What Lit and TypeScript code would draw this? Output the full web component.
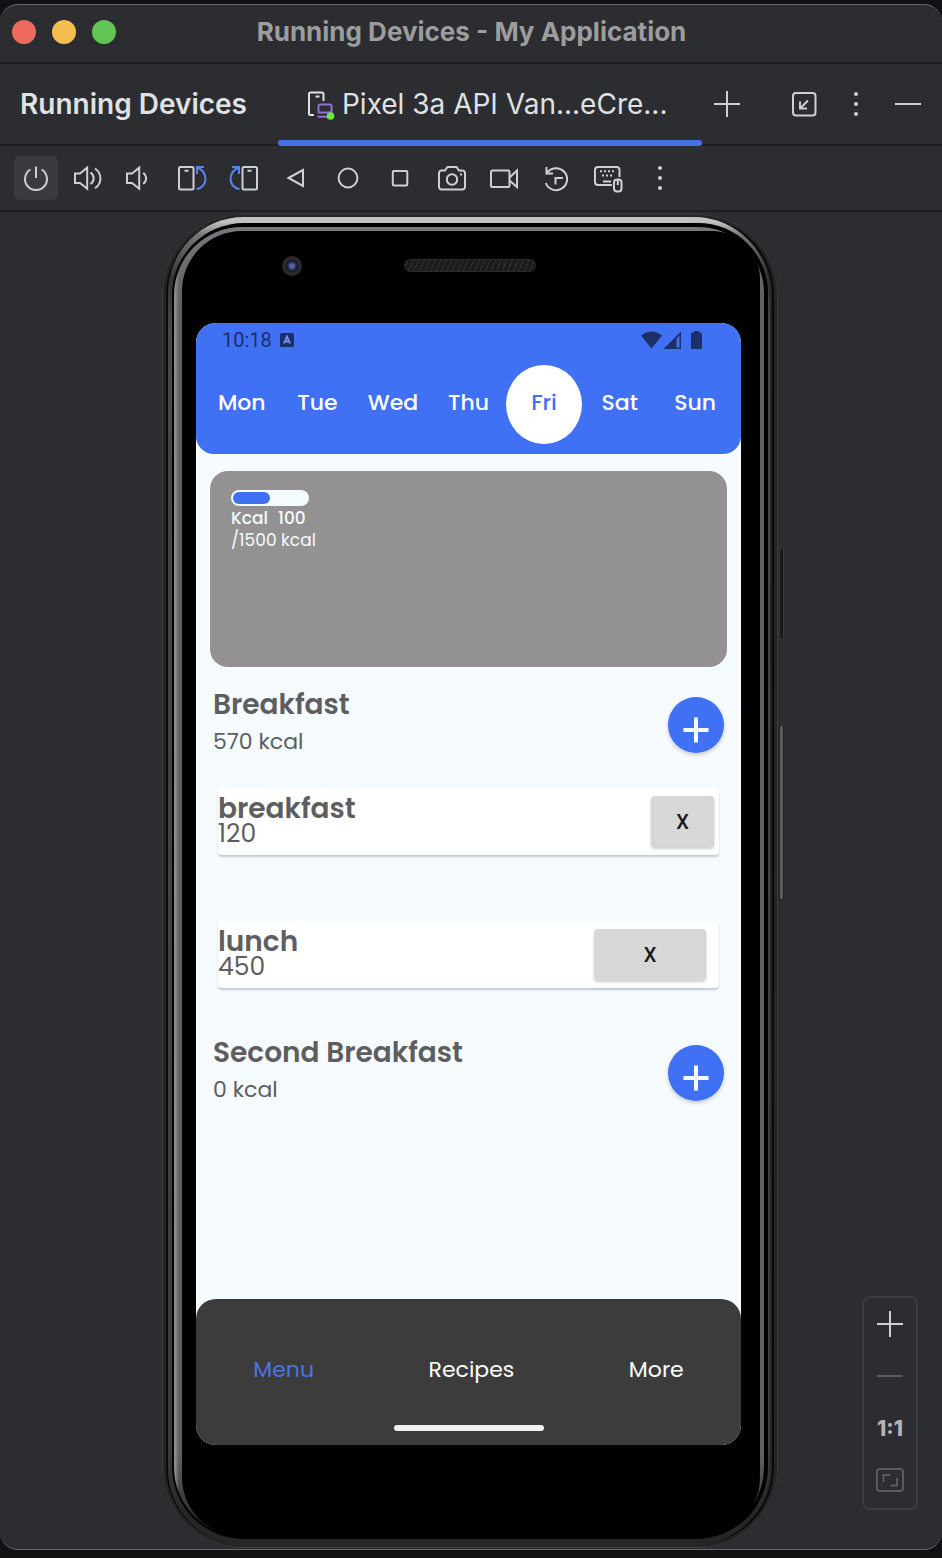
import { LitElement, html, css, svg, nothing } from "lit";
import { customElement, property, state } from "lit/decorators.js";
import { classMap } from "lit/directives/class-map.js";

const ICONS: Record<string, unknown> = {
  power: svg`<path d="M-5.5 -8.5A11 11 0 1 0 5.5 -8.5M0 -11.5V0"/>`,
  volumeUp: svg`<path d="M-13 -4.5h5L-.8 -10.3v21L-8 5h-5zM2.5 -5.5c4.2 3 4.2 8.600 0 11.500M7 -9.500c7.200 5 7.200 14.800 0 19.600"/>`,
  volumeDown: svg`<path d="M-13 -4.5h5L-.8 -10.3v21L-8 5h-5zM3.200 -5.300c3.800 3 3.800 8.400 0 11.200"/>`,
  rotateLeft: svg`<rect x="-13" y="-11" width="14.500" height="22.600" rx="1.500"/><path d="M-7.500 -7.300h4"/><path class="blue" d="M12 -11H5v7M5.500 -10.500C16.500 -5 16 8.500 4.500 11.200"/>`,
  rotateRight: svg`<g transform="scale(-1 1)"><rect x="-13" y="-11" width="14.500" height="22.600" rx="1.500"/><path d="M-7.500 -7.300h4"/><path class="blue" d="M12 -11H5v7M5.500 -10.500C16.500 -5 16 8.500 4.500 11.200"/></g>`,
  back: svg`<path d="M-7.500 0L7 -8V8z"/>`,
  home: svg`<circle r="9.400"/>`,
  overview: svg`<rect x="-7.200" y="-7" width="14.500" height="14.500" rx="1"/>`,
  camera: svg`<path d="M-10.500 -7.500h3.500l2.500 -3.500h9l2.500 3.500h3.500a2.500 2.500 0 0 1 2.500 2.500v14a2.500 2.500 0 0 1 -2.500 2.500h-21a2.500 2.500 0 0 1 -2.500 -2.500v-14a2.500 2.500 0 0 1 2.500 -2.500z"/><circle cy="1.500" r="5.200"/><path d="M8 -3.500h2"/>`,
  video: svg`<rect x="-13" y="-7.500" width="18.500" height="16.500" rx="1.500"/><path d="M5.500 -.5L13 -7.500V9L5.500 2.500"/>`,
  snapshot: svg`<path d="M-9.500 -11v6.500h6.500M-9 -5A11 11 0 1 1 -10.200 5M7 0H-.5V6.500"/>`,
  keyboard: svg`<path d="M4 7h-14a3 3 0 0 1 -3 -3v-12a3 3 0 0 1 3 -3h18.500a3 3 0 0 1 3 3v7M-5 3.500h8"/><path stroke-dasharray="2 2" d="M-8 -6.700h15M-6 -2.500h11"/><rect x="6" y="1.500" width="7.500" height="12" rx="3"/><path d="M9.800 2v5"/>`,
  more: svg`<g class="solid"><circle cy="-10" r="2"/><circle r="2"/><circle cy="10" r="2"/></g>`,
  plus: svg`<path d="M-13 0h26M0 -13v26"/>`,
  minus: svg`<path d="M-13 0h26"/>`,
  dock: svg`<rect x="-11" y="-11" width="22.500" height="22.500" rx="3"/><path d="M4 -3.500L-4 4.500M-4 -2.500v7h7"/>`,
  fit: svg`<rect x="-13" y="-11" width="26" height="22" rx="3"/><path d="M-6.500 2v-7h6.500M7 -2v7.500H.5"/>`,
  device: svg`<path d="M-6 11h-3.500a1.500 1.500 0 0 1 -1.500 -1.500v-19.500a1.500 1.500 0 0 1 1.500 -1.500h11.500a1.500 1.500 0 0 1 1.500 1.500v7M-4.500 -7.500h4"/><path class="purple" d="M-1.500 8.500v-6.500a1.500 1.500 0 0 1 1.500 -1.500h10a1.500 1.500 0 0 1 1.500 1.500v6.500zM-2.500 12.800h10"/><circle class="green" cx="10.500" cy="12" r="3.800"/>`,
};

@customElement("line-icon")
class LineIcon extends LitElement {
  static styles = css`
    :host { display: inline-flex; }
    .glyph {
      width: 32px; height: 32px; overflow: visible;
      fill: none; stroke: currentColor; stroke-width: 2;
    }
    .blue { stroke: #5585e8; }
    .purple { stroke: #9470d4; }
    .green { fill: #6be847; stroke: none; }
    .solid { fill: currentColor; stroke: none; }
  `;
  @property() name = "";
  render() {
    return html`<svg class="glyph" viewBox="-16 -16 32 32" aria-hidden="true">${ICONS[this.name] ?? nothing}</svg>`;
  }
}

interface Entry { name: string; kcal: number; wide?: boolean; }
interface Meal { title: string; kcal: number; entries: Entry[]; }

@customElement("diet-app")
class DietApp extends LitElement {
  static styles = css`
    :host {
      display: flex; flex-direction: column; flex: 1;
      background: #f5fbff; border-radius: 20px; overflow: hidden;
      font-family: Poppins, Inter, "Liberation Sans", sans-serif;
      color: #5e5e60;
    }
    * { box-sizing: border-box; }
    button { font: inherit; border: 0; padding: 0; cursor: pointer; }
    h2, h3, p { margin: 0; }
    .top { background: #4070f4; border-radius: 18px; padding: 6px 8px 10px; }
    .status {
      display: flex; align-items: center; height: 22px; padding: 0 30px 0 18px;
      color: #1c2f69; font: 20px/22px Roboto, sans-serif;
    }
    .badge { width: 14px; height: 14px; margin-left: 8px; }
    .signals { width: 62px; height: 18px; margin-left: auto; fill: currentColor; }
    .days { display: grid; grid-template-columns: repeat(7, 1fr); margin-top: 14px; }
    .day {
      height: 79px; padding-bottom: 4px; border-radius: 50%; background: none;
      color: #fff; font-size: 22px; font-weight: 500;
    }
    .day.on { background: #fff; color: #4070f4; }
    .body { flex: 1; padding: 17px 14px 24px; }
    .summary {
      height: 196px; padding: 19px 21px; border-radius: 18px;
      background: #939191; color: #f5fbff; font-size: 17px; line-height: 22px;
    }
    .track { width: 78px; height: 16px; padding: 2px; border-radius: 8px; background: #f5fbff; }
    .fill { height: 12px; border-radius: 6px; background: #4070f4; }
    .eaten { display: flex; gap: 10px; margin-top: 1px; font-weight: 500; }
    .meal { padding: 0 3px; margin-top: 21px; }
    .meal + .meal { margin-top: 48px; }
    .head { display: flex; justify-content: space-between; }
    .title { font-size: 28px; line-height: 34px; font-weight: 600; }
    .total { font-size: 22px; line-height: 40px; }
    .add {
      width: 56px; height: 56px; margin-top: 9px; border-radius: 50%;
      background: #4070f4; box-shadow: 0 2px 4px #0003;
    }
    .cross { display: block; width: 56px; height: 56px; stroke: #f5fbff; stroke-width: 4; }
    .entries { display: flex; flex-direction: column; gap: 66px; margin: 26px 5px 0; padding: 0; list-style: none; }
    .entry {
      display: flex; justify-content: space-between; height: 67px; padding: 8px 5px 8px 0;
      border-radius: 4px; background: #fff; box-shadow: 0 2px 2px #0003;
    }
    .entry.roomy { padding-right: 13px; }
    .name { font-size: 28px; line-height: 25px; font-weight: 600; }
    .kcal { font-size: 25px; line-height: 25px; }
    .remove {
      width: 63px; height: 51px; border-radius: 4px; background: #d7d7d7; color: #1a1a1a;
      font: 500 20px Roboto, sans-serif; box-shadow: 0 2px 3px #0003;
    }
    .roomy .remove { width: 112px; }
    .bottom { padding: 53px 0 14px; border-radius: 20px 20px 0 0; background: #3c3c3c; }
    .links { display: flex; justify-content: space-around; }
    .link { color: #fff; font-size: 22px; line-height: 36px; text-decoration: none; }
    .link.on { color: #4b74e6; }
    .pill { width: 150px; height: 6px; margin: 37px auto 0; border-radius: 3px; background: #f2f0f2; }
  `;

  @state() private day = "Fri";

  private days = ["Mon", "Tue", "Wed", "Thu", "Fri", "Sat", "Sun"];
  private progress = 50;
  private meals: Meal[] = [
    { title: "Breakfast", kcal: 570, entries: [{ name: "breakfast", kcal: 120 }, { name: "lunch", kcal: 450, wide: true }] },
    { title: "Second Breakfast", kcal: 0, entries: [] },
  ];

  private renderMeal(meal: Meal) {
    return html`
      <section class="meal">
        <div class="head">
          <div>
            <h2 class="title">${meal.title}</h2>
            <p class="total">${meal.kcal} kcal</p>
          </div>
          <button class="add" aria-label="Add to ${meal.title}">
            <svg class="cross" viewBox="0 0 56 56"><path d="M15.500 33h25M28 20.500v25"/></svg>
          </button>
        </div>
        ${meal.entries.length
          ? html`<ul class="entries">
              ${meal.entries.map((e) => html`
                <li class=${classMap({ entry: true, roomy: !!e.wide })}>
                  <div>
                    <h3 class="name">${e.name}</h3>
                    <p class="kcal">${e.kcal}</p>
                  </div>
                  <button class="remove" aria-label="Remove ${e.name}">X</button>
                </li>`)}
            </ul>`
          : nothing}
      </section>`;
  }

  render() {
    return html`
      <header class="top">
        <div class="status">
          <span>10:18</span>
          <svg class="badge" viewBox="0 0 14 14" aria-hidden="true">
            <rect width="14" height="14" rx="1.500" fill="#1c2f69"/>
            <path d="M4 10.500L7 3.500L10 10.500M5 8.500h4" fill="none" stroke="#6f93f7" stroke-width="1.800"/>
          </svg>
          <svg class="signals" viewBox="0 0 62 18" aria-hidden="true">
            <path d="M0 4.500Q10.500 -3.500 21 4.500L10.500 17.500z"/>
            <path fill-rule="evenodd" d="M22.500 18L40 .5V18zM35.500 7.500v9h3v-12z"/>
            <path d="M50 3q0 -1.500 1.500 -1.500h1.500V0h5v1.500h1.500q1.500 0 1.500 1.500v13.500q0 1.500 -1.500 1.500h-8q-1.500 0 -1.500 -1.500z"/>
          </svg>
        </div>
        <div class="days">
          ${this.days.map((d) => html`
            <button class=${classMap({ day: true, on: d === this.day })} @click=${() => (this.day = d)}>${d}</button>`)}
        </div>
      </header>
      <main class="body">
        <section class="summary">
          <div class="track"><div class="fill" style="width:${this.progress}%"></div></div>
          <div class="eaten"><span>Kcal</span><span>100</span></div>
          <div>/1500 kcal</div>
        </section>
        ${this.meals.map((m) => this.renderMeal(m))}
      </main>
      <nav class="bottom">
        <div class="links">
          <a class="link on" href="#menu">Menu</a>
          <a class="link" href="#recipes">Recipes</a>
          <a class="link" href="#more">More</a>
        </div>
        <div class="pill"></div>
      </nav>`;
  }
}

@customElement("app-root")
class AppRoot extends LitElement {
  static styles = css`
    :host {
      display: flex; flex-direction: column; min-height: 100vh; box-sizing: border-box;
      padding: 4px 0 8px; background: #111113;
      font-family: Inter, "Liberation Sans", sans-serif; color: #dfe1e5;
    }
    * { box-sizing: border-box; }
    button { font: inherit; border: 0; padding: 0; color: inherit; background: none; cursor: pointer; }
    h1, h2 { margin: 0; }
    .window {
      flex: 1; display: flex; flex-direction: column; overflow: hidden;
      background: #2b2d30; border: solid #66676a; border-width: 1px 0; border-radius: 18px;
    }
    .titlebar {
      display: grid; grid-template-columns: 1fr auto 1fr; align-items: center;
      height: 59px; padding: 0 11px 4px 12px; border-bottom: 2px solid #1e1f22;
    }
    .lights { display: flex; gap: 16px; }
    .light { width: 24px; height: 24px; border-radius: 50%; }
    .red { background: #ec6a5e; }
    .amber { background: #f4be4f; }
    .lime { background: #61c554; }
    .caption { font-size: 26px; line-height: 32px; font-weight: 700; color: #9c9d9f; }
    .tabs { display: flex; align-items: center; height: 82px; padding: 0 12px 0 20px; border-bottom: 2px solid #1e1f22; }
    .label { font-size: 28px; line-height: 36px; font-weight: 600; }
    .tab {
      display: flex; align-items: center; gap: 6px; height: 80px; margin: 0 3px 0 31px; padding: 0 34px 0 26px;
      font-size: 28px; position: relative; white-space: nowrap;
    }
    .tab::after {
      content: ""; position: absolute; inset: auto 0 -2px 0; height: 6px; border-radius: 3px; background: #4672e6;
    }
    .tool { display: inline-flex; align-items: center; justify-content: center; width: 44px; height: 44px; border-radius: 6px; color: #ced0d6; }
    .tool.on { background: #393b40; }
    .actions { display: flex; gap: 8px; margin-left: auto; }
    .toolbar { display: flex; gap: 8px; height: 66px; padding: 10px 14px; border-bottom: 2px solid #1e1f22; }
    .stage { position: relative; flex: 1; display: flex; padding: 2px 164px 1px 162px; }

    .phone {
      flex: 1; display: flex; position: relative; padding: 3px 8px 3px 6px; border-radius: 80px;
      background: #242424; box-shadow: inset 0 0 0 1px #3c3c3c, inset 0 0 0 4px #242424, inset 0 0 0 6px #0a0a0a;
    }
    .side { position: absolute; right: -6px; width: 5px; border-radius: 2px; background: #1a1a1b; border: 1px solid #3a3a3b; }
    .power { top: 334px; height: 92px; }
    .volume { top: 511px; height: 175px; background: #5a5a5a; border-color: #222; }
    .rim {
      flex: 1; display: flex; padding: 6px 2px 6px 4px; border-radius: 76px;
      background: linear-gradient(#c2c2c2 5px, #777 18px, #333 60px, #484848 110px, #3c3c3c calc(100% - 100px), #262626 calc(100% - 30px));
    }
    .gap { flex: 1; display: flex; padding: 4px 4px 2px 2px; border-radius: 72px 70px 72px 72px; background: #000; }
    .ring {
      flex: 1; display: flex; padding: 4px 4px 0 8px; border-radius: 68px 66px 70px 70px;
      background:
        linear-gradient(90deg, #8e8f93 1px, #8e8f9300 5px),
        linear-gradient(#77787b, #5f6064 80px, #5f6064 calc(100% - 80px), #1c1c1d);
    }
    .face {
      flex: 1; display: flex; flex-direction: column; padding: 0 19px 92px 14px;
      border-radius: 60px 48px 60px 60px; background: #000;
    }
    .sensors { display: grid; grid-template-columns: 1fr auto 1fr; height: 92px; padding: 25px 0 0 3px; align-items: start; }
    .lens { width: 20px; height: 20px; margin-left: 83px; border-radius: 50%; background: radial-gradient(#5563a0 0 2px, #252b50 4px, #15172a 6px, #2b2b2d 7px); }
    .speaker {
      width: 132px; height: 13px; margin-top: 3px; border-radius: 7px; border: 1px solid #2b2b2b;
      background: repeating-linear-gradient(115deg, #1a1a1a 0 2px, #303030 2px 3px, #1c1c1c 3px 5px);
    }
    .zoom {
      position: absolute; right: 24px; bottom: 39px; width: 56px; padding: 4px 0 6px;
      display: flex; flex-direction: column; align-items: center; gap: 8px;
      border: 2px solid #3c3d41; border-radius: 8px; background: #2b2d30;
    }
    .dim { color: #5a5c61; }
    .ratio { font-size: 21px; font-weight: 800; color: #b4b5b9; }
  `;

  private tools = [
    ["power", "Power"], ["volumeUp", "Volume up"], ["volumeDown", "Volume down"],
    ["rotateLeft", "Rotate left"], ["rotateRight", "Rotate right"], ["back", "Back"],
    ["home", "Home"], ["overview", "Overview"], ["camera", "Screenshot"],
    ["video", "Record screen"], ["snapshot", "Snapshots"], ["keyboard", "Hardware input"], ["more", "More"],
  ];

  private tool(name: string, label: string, extra = "") {
    return html`<button class="tool ${extra}" aria-label=${label}><line-icon name=${name}></line-icon></button>`;
  }

  render() {
    return html`
      <div class="window">
        <header class="titlebar">
          <div class="lights">
            <button class="light red" aria-label="Close"></button>
            <button class="light amber" aria-label="Minimise"></button>
            <button class="light lime" aria-label="Zoom"></button>
          </div>
          <h1 class="caption">Running Devices - My Application</h1>
        </header>
        <div class="tabs">
          <h2 class="label">Running Devices</h2>
          <button class="tab"><line-icon name="device"></line-icon><span>Pixel 3a API Van...eCre...</span></button>
          ${this.tool("plus", "Add device")}
          <div class="actions">
            ${this.tool("dock", "Dock")}${this.tool("more", "Options")}${this.tool("minus", "Hide")}
          </div>
        </div>
        <div class="toolbar">
          ${this.tools.map(([n, l], i) => this.tool(n, l, i === 0 ? "on" : ""))}
        </div>
        <div class="stage">
          <div class="phone">
            <div class="side power"></div>
            <div class="side volume"></div>
            <div class="rim"><div class="gap"><div class="ring"><div class="face">
              <div class="sensors"><div class="lens"></div><div class="speaker"></div></div>
              <diet-app></diet-app>
            </div></div></div></div>
          </div>
          <div class="zoom">
            ${this.tool("plus", "Zoom in")}
            ${this.tool("minus", "Zoom out", "dim")}
            <button class="tool ratio">1:1</button>
            ${this.tool("fit", "Fit to window", "dim")}
          </div>
        </div>
      </div>`;
  }
}
